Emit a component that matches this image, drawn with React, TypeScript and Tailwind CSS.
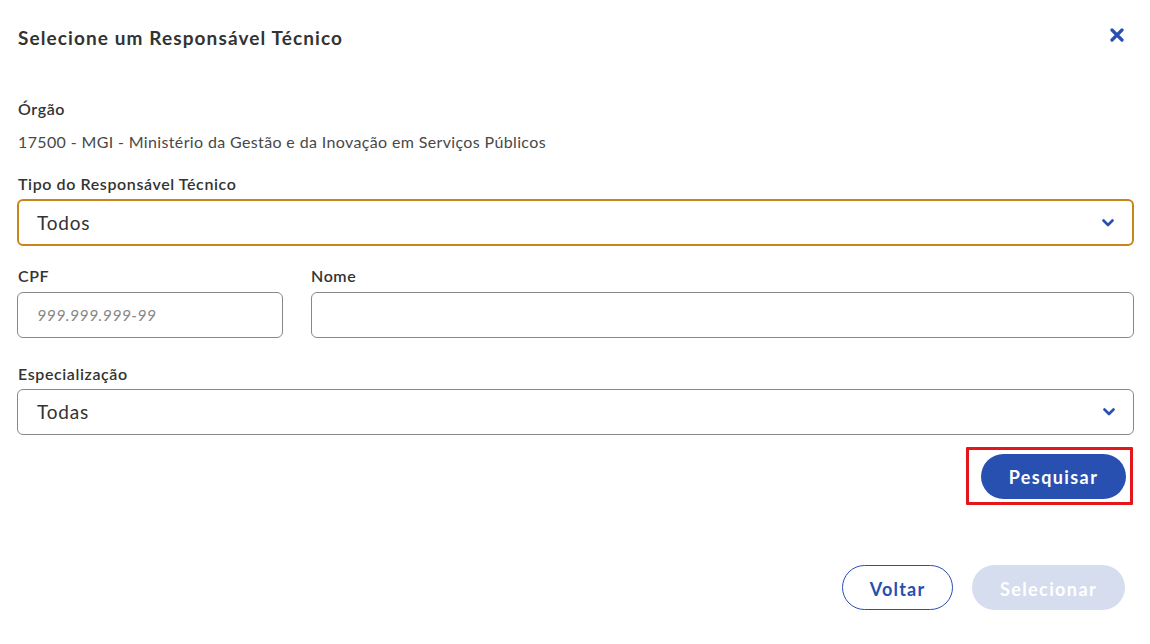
const font = { fontFamily: 'Lato, "Noto Sans", sans-serif' }

function Chevron() {
  return (
    <svg width="12" height="8" viewBox="0 0 12 8" aria-hidden="true" className="shrink-0">
      <path d="M1.5 1.5 L6 6 L10.5 1.5" fill="none" stroke="#2850b0" strokeWidth="2.6" strokeLinecap="round" strokeLinejoin="round" />
    </svg>
  )
}

function Label({ children }: { children: React.ReactNode }) {
  return <div className="text-[16px] leading-6 font-semibold tracking-[0.6px] text-[#333]">{children}</div>
}

export default function App() {
  return (
    <div className="h-[644px] w-[1150px] bg-white pl-[17px] pr-[16px] pt-[24px] text-[#333]" style={font}>
      <div className="flex items-center justify-between">
        <h1 className="pl-px text-[19px] leading-7 font-bold tracking-[1.1px] text-[#333]">Selecione um Responsável Técnico</h1>
        <button type="button" aria-label="Fechar" className="mr-[7px] -mt-[6px] flex size-5 items-center justify-center">
          <svg width="14" height="14" viewBox="0 0 14 14">
            <path d="M2 2 L12 12 M12 2 L2 12" stroke="#2850b0" strokeWidth="3.2" strokeLinecap="round" />
          </svg>
        </button>
      </div>

      <div className="mt-[45px] pl-px">
        <Label>Órgão</Label>
      </div>
      <div className="mt-[9px] pl-px text-[16px] leading-6 tracking-[0.36px] text-[#484848]">
        17500 - MGI - Ministério da Gestão e da Inovação em Serviços Públicos
      </div>

      <div className="mt-[18px] pl-px">
        <Label>Tipo do Responsável Técnico</Label>
      </div>
      <div className="mt-[3px] flex h-[47px] items-center justify-between rounded-[6px] border-2 border-[#c8861a] pl-[18px] pr-[18px]">
        <span className="pt-px text-[19px] tracking-[0.8px] text-[#333]">Todos</span>
        <Chevron />
      </div>

      <div className="mt-[18px] flex gap-[28px]">
        <div className="flex w-[266px] flex-col">
          <div className="pl-px">
            <Label>CPF</Label>
          </div>
          <div className="mt-[4px] flex h-[46px] items-center rounded-[6px] border border-[#888] pl-[19px]">
            <span className="text-[16px] italic tracking-[0.3px] text-[#888]">999.999.999-99</span>
          </div>
        </div>
        <div className="flex flex-1 flex-col">
          <Label>Nome</Label>
          <div className="mt-[4px] h-[46px] rounded-[6px] border border-[#888]" />
        </div>
      </div>

      <div className="mt-[24px] pl-px">
        <Label>Especialização</Label>
      </div>
      <div className="mt-[3px] flex h-[46px] items-center justify-between rounded-[6px] border border-[#888] pl-[19px] pr-[18px]">
        <span className="pt-px text-[19px] tracking-[0.8px] text-[#333]">Todas</span>
        <Chevron />
      </div>

      <div className="mt-[12px] flex justify-end pr-px">
        <div className="flex h-[58px] w-[167px] items-center rounded-[1px] border-[3px] border-[#e3161b] pl-[12px]">
          <button
            type="button"
            className="flex h-[45px] w-[145px] items-center justify-center rounded-full bg-[#2850b0] pt-[3px] text-[18px] font-bold tracking-[1.4px] text-white"
          >
            Pesquisar
          </button>
        </div>
      </div>

      <div className="mt-[60px] flex justify-end gap-[19px] pr-[9px]">
        <button
          type="button"
          className="flex h-[45px] w-[111px] items-center justify-center rounded-full border border-[#2850b0] pt-[3px] text-[18px] font-bold tracking-[1.2px] text-[#2850b0]"
        >
          Voltar
        </button>
        <button
          type="button"
          disabled
          className="flex h-[45px] w-[153px] items-center justify-center rounded-full bg-[#d5ddef] pt-[3px] text-[18px] font-bold tracking-[1.4px] text-white"
        >
          Selecionar
        </button>
      </div>
    </div>
  )
}
